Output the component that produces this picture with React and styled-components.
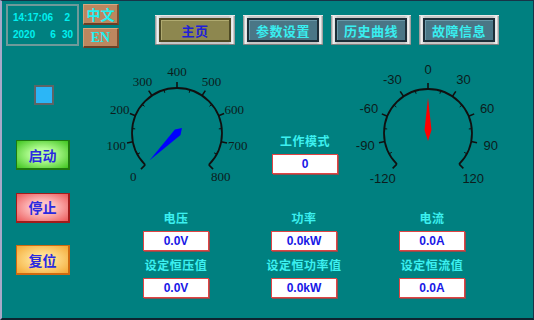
import React from 'react';
import styled, { createGlobalStyle } from 'styled-components';

const GlobalStyle = createGlobalStyle`
  body {
    margin: 0;
    font-family: "Noto Sans CJK SC", "Liberation Sans", sans-serif;
  }
`;

const Screen = styled.div`
  width: 534px;
  height: 320px;
  box-sizing: border-box;
  background: #008080;
  border-left: 2px solid #a8a8c8;
  border-top: 1px solid #173448;
  border-right: 1px solid #173448;
  border-bottom: 2px solid #0c2430;
  display: flex;
  flex-direction: column;
  overflow: hidden;
`;

const TopBar = styled.div`
  display: flex;
  align-items: flex-start;
  height: 47px;
  padding: 3px 0 0 4px;
  box-sizing: border-box;
`;

const Clock = styled.div`
  width: 73px;
  height: 42px;
  box-sizing: border-box;
  border: 2px solid #6f9a9a;
  padding: 6px 4px 0 5px;
  display: flex;
  flex-direction: column;
  gap: 6px;
  font-family: "Liberation Sans", sans-serif;
  font-weight: bold;
  font-size: 10px;
  line-height: 11px;
  color: #00f0f0;
`;

const ClockRow = styled.div`
  display: flex;
  padding-right: ${p => p.$pad || 0}px;
`;

const ClockPart = styled.span`
  margin-left: ${p => p.$gap || 0}px;
  &:last-child {
    margin-left: auto;
  }
`;

const LangCol = styled.div`
  margin-left: 4px;
  display: flex;
  flex-direction: column;
  gap: 3px;
`;

const LangButton = styled.div`
  width: 36px;
  height: ${p => p.$h}px;
  box-sizing: border-box;
  background: #bc875f;
  border-top: 1px solid #d8a880;
  border-left: 1px solid #d0a078;
  border-right: 2px solid #7a4e30;
  border-bottom: 2px solid #6a4026;
  color: #22f0f0;
  font-weight: bold;
  font-size: 14px;
  display: flex;
  align-items: center;
  justify-content: center;
  font-family: ${p => p.$latin ? '"Liberation Serif", serif' : '"Noto Sans CJK SC", sans-serif'};
`;

const Nav = styled.div`
  margin-left: 36px;
  margin-top: 11px;
  display: flex;
  gap: 8px;
`;

const NavFrame = styled.div`
  width: 80px;
  height: 30px;
  box-sizing: border-box;
  padding: 2px 4px;
  background: linear-gradient(to right, #8c8c8c 0%, #f0f0f0 3%, #c6c6c6 8%, #c6c6c6 92%, #f0f0f0 97%, #8c8c8c 100%);
  border-top: 1px solid #e8e8e8;
  border-bottom: 1px solid #808080;
`;

const NavInner = styled.div`
  height: 100%;
  box-sizing: border-box;
  background: ${p => p.$active ? '#8d874f' : '#4a7686'};
  border: 2px solid ${p => p.$active ? '#4e4a24' : '#1c2e38'};
  box-shadow: inset 1px 1px 0 ${p => p.$active ? '#b0aa70' : '#6a98a8'};
  color: ${p => p.$active ? '#2020d8' : '#38eef0'};
  font-weight: bold;
  font-size: 13px;
  display: flex;
  align-items: center;
  justify-content: center;
  letter-spacing: 0.5px;
`;

const Body = styled.div`
  flex: 1;
  display: grid;
  grid-template-columns: 98px 1fr;
`;

const LeftCol = styled.div`
  display: flex;
  flex-direction: column;
  align-items: flex-start;
  padding-top: 37px;
`;

const Indicator = styled.div`
  margin-left: 32px;
  width: 20px;
  height: 20px;
  box-sizing: border-box;
  border: 2px solid #5e6466;
  background: #2cb6f6;
`;

const ButtonStack = styled.div`
  margin-top: 35px;
  margin-left: 14px;
  display: flex;
  flex-direction: column;
  gap: 22.5px;
`;

const tones = {
  green: { mid: '#b8ff98', edge: '#3ec41e', border: '#1e7a10' },
  red: { mid: '#ffc4c4', edge: '#ec5858', border: '#a01c1c' },
  orange: { mid: '#ffe090', edge: '#f4a834', border: '#d06a10' }
};

const CtrlButton = styled.div`
  width: 54px;
  height: 30px;
  box-sizing: border-box;
  border: 1px solid ${p => tones[p.$tone].border};
  border-right-width: 2px;
  border-bottom-width: 2px;
  background: radial-gradient(ellipse at center, ${p => tones[p.$tone].mid} 0%, ${p => tones[p.$tone].mid} 30%, ${p => tones[p.$tone].edge} 100%);
  color: #2a2ae0;
  font-weight: bold;
  font-size: 14px;
  display: flex;
  align-items: center;
  justify-content: center;
`;

const Main = styled.div`
  display: flex;
  flex-direction: column;
`;

const GaugeRow = styled.div`
  margin-top: 10px;
  padding-left: 5px;
  height: 132px;
  display: flex;
`;

const MidCol = styled.div`
  width: 100px;
  display: flex;
  flex-direction: column;
  align-items: center;
  padding-top: 74px;
  box-sizing: border-box;
`;

const Label = styled.div`
  height: ${p => p.$h || 20}px;
  line-height: ${p => p.$h || 20}px;
  margin-top: ${p => p.$top || 0}px;
  color: #3cf0f0;
  font-weight: bold;
  font-size: 12px;
  text-align: center;
  letter-spacing: 0.5px;
`;

const ValueBox = styled.div`
  width: 66px;
  height: 20px;
  margin-top: ${p => p.$top || 0}px;
  box-sizing: border-box;
  background: #ffffff;
  border: 1px solid #e04444;
  box-shadow: 1px 1px 0 #8a5050;
  color: #1818e6;
  font-family: "Liberation Sans", sans-serif;
  font-weight: bold;
  font-size: 12px;
  display: flex;
  align-items: center;
  justify-content: center;
`;

const Readings = styled.div`
  margin-left: 12px;
  margin-top: 18px;
  display: grid;
  grid-template-columns: repeat(3, 128px);
`;

const ReadingCol = styled.div`
  display: flex;
  flex-direction: column;
  align-items: center;
`;

const rad = d => (d * Math.PI) / 180;

const Gauge = ({ min, max, major, minor, value, cx, cy, r, labelR, font, fontSize, needle, color }) => {
  const ang = v => -135 + ((v - min) / (max - min)) * 270;
  const pt = (a, d, off = 0) => {
    const s = Math.sin(rad(a));
    const c = Math.cos(rad(a));
    return [cx + d * s + off * c, cy - d * c + off * s];
  };
  const [sx, sy] = pt(-135, r);
  const [ex, ey] = pt(135, r);
  const ticks = [];
  for (let v = min; v <= max + 0.001; v += minor) {
    const a = ang(v);
    const isMajor = Math.abs(((v - min) / major) - Math.round((v - min) / major)) < 0.001;
    const [x1, y1] = pt(a, r);
    const [x2, y2] = pt(a, isMajor ? r + 6 : r - 3);
    ticks.push(<line key={'t' + v} x1={x1} y1={y1} x2={x2} y2={y2} stroke="#101010" strokeWidth={isMajor ? 1.6 : 1} />);
  }
  const labels = [];
  for (let v = min; v <= max + 0.001; v += major) {
    const [x, y] = pt(ang(v), labelR);
    labels.push(
      <text key={'l' + v} x={x} y={y} textAnchor="middle" dominantBaseline="central"
        fontFamily={font} fontSize={fontSize} fill="#0c1c1c">{v}</text>
    );
  }
  const a = ang(value);
  const poly = needle.map(([d, off]) => pt(a, d, off).join(',')).join(' ');
  return (
    <svg width="150" height="132" viewBox="0 0 150 132">
      <path d={`M ${sx} ${sy} A ${r} ${r} 0 1 1 ${ex} ${ey}`} fill="none" stroke="#101010" strokeWidth="1.8" />
      {ticks}
      {labels}
      <polygon points={poly} fill={color} />
    </svg>
  );
};

const readings = [
  { name: '电压', set: '设定恒压值', unit: 'V' },
  { name: '功率', set: '设定恒功率值', unit: 'kW' },
  { name: '电流', set: '设定恒流值', unit: 'A' }
];

const navItems = ['主页', '参数设置', '历史曲线', '故障信息'];

export default function App() {
  return (
    <>
      <GlobalStyle />
      <Screen>
        <TopBar>
          <Clock>
            <ClockRow $pad={3}>
              <ClockPart>14:17:06</ClockPart>
              <ClockPart>2</ClockPart>
            </ClockRow>
            <ClockRow>
              <ClockPart>2020</ClockPart>
              <ClockPart $gap={15}>6</ClockPart>
              <ClockPart>30</ClockPart>
            </ClockRow>
          </Clock>
          <LangCol>
            <LangButton $h={21}>中文</LangButton>
            <LangButton $h={20} $latin>EN</LangButton>
          </LangCol>
          <Nav>
            {navItems.map((t, i) => (
              <NavFrame key={t}>
                <NavInner $active={i === 0}>{t}</NavInner>
              </NavFrame>
            ))}
          </Nav>
        </TopBar>
        <Body>
          <LeftCol>
            <Indicator />
            <ButtonStack>
              <CtrlButton $tone="green">启动</CtrlButton>
              <CtrlButton $tone="red">停止</CtrlButton>
              <CtrlButton $tone="orange">复位</CtrlButton>
            </ButtonStack>
          </LeftCol>
          <Main>
            <GaugeRow>
              <Gauge min={0} max={800} major={100} minor={50} value={0}
                cx={72} cy={75} r={45} labelR={62}
                font='"Liberation Serif", serif' fontSize={13}
                color="#0000ff"
                needle={[[39, 0], [-1, 4], [-7, 0], [-1, -4]]} />
              <MidCol>
                <Label $h={18}>工作模式</Label>
                <ValueBox $top={4}>0</ValueBox>
              </MidCol>
              <Gauge min={-120} max={120} major={30} minor={15} value={0}
                cx={73} cy={75} r={44} labelR={64}
                font='"Liberation Sans", sans-serif' fontSize={13}
                color="#ff0000"
                needle={[[35, 0], [3, 3.5], [-8, 0], [3, -3.5]]} />
            </GaugeRow>
            <Readings>
              {readings.map(r => (
                <ReadingCol key={r.name}>
                  <Label>{r.name}</Label>
                  <ValueBox $top={3}>0.0{r.unit}</ValueBox>
                  <Label $top={4}>{r.set}</Label>
                  <ValueBox $top={3}>0.0{r.unit}</ValueBox>
                </ReadingCol>
              ))}
            </Readings>
          </Main>
        </Body>
      </Screen>
    </>
  );
}
